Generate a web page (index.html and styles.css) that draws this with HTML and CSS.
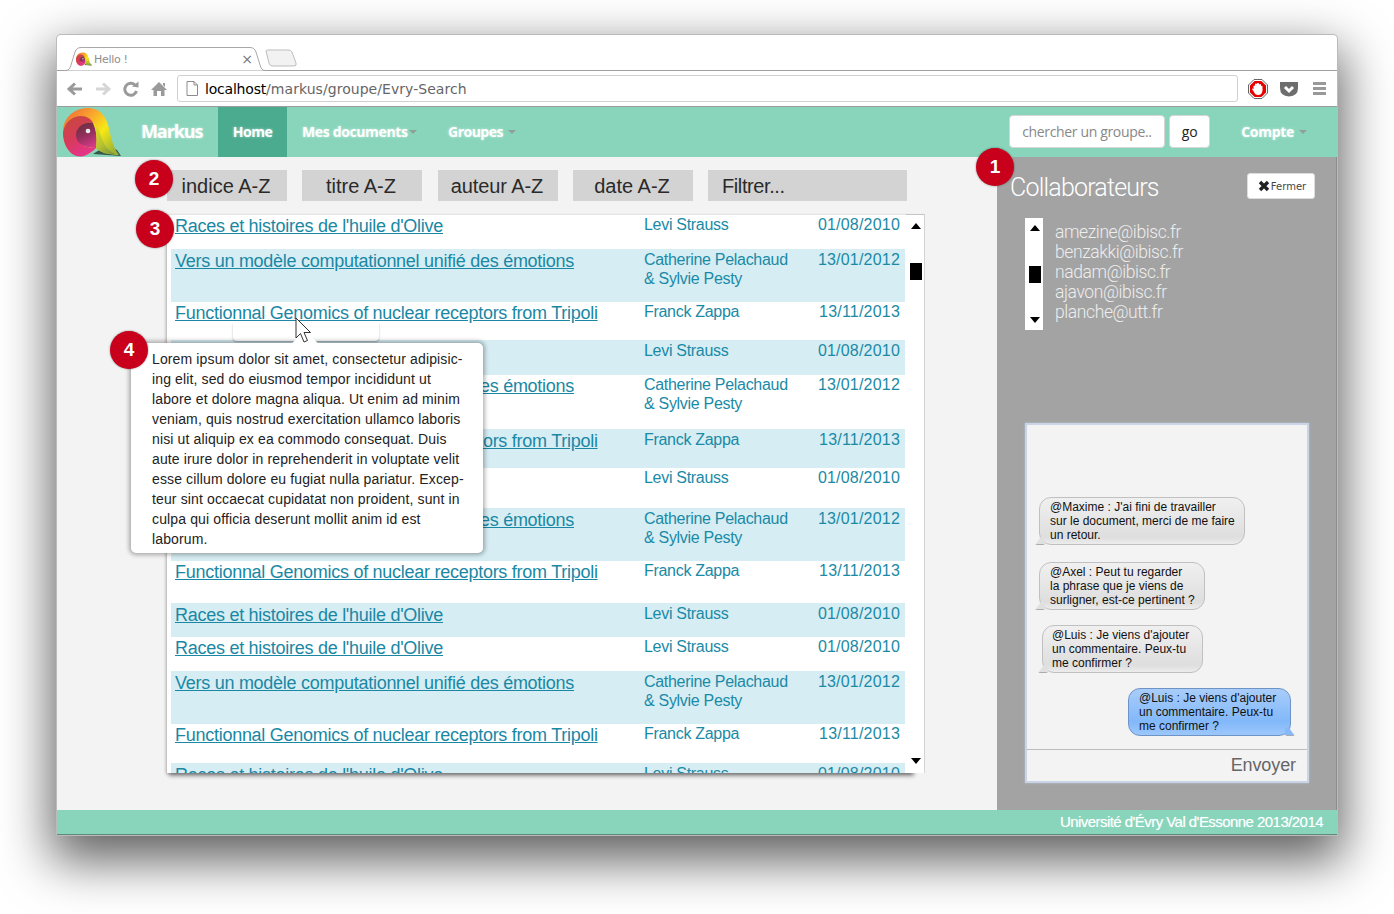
FILE: index.html
```html
<!DOCTYPE html>
<html lang="fr">
<head>
<meta charset="utf-8">
<title>Hello !</title>
<link rel="stylesheet" href="styles.css">
</head>
<body>
<div class="window">
  <div class="tabstrip">
    <div class="tab">
      <svg class="tab-shape" width="203" height="24" viewBox="0 0 203 24"><path d="M1 23.5 H3 C6 23.5 7 21 8 18 L12 5 C13 2 15 .5 18 .5 H187 C190 .5 192 2 193 5 L197 18 C198 21 199 23.5 202 23.5" fill="#fff" stroke="#a8a8a8"/></svg>
      <svg class="favicon" width="16" height="16" viewBox="0 0 58 50"><use href="#logo-mark"/></svg>
      <span class="tab-title">Hello !</span>
      <span class="tab-close">×</span>
    </div>
    <svg class="newtab" width="32" height="18" viewBox="0 0 32 18"><path d="M1 2 Q1 1 3 1 H23 Q26 1 27 3 L31 14 Q32 17 29 17 H7 Q5 17 4 14 Z" fill="#f2f2f2" stroke="#bdbdbd"/></svg>
  </div>
  <div class="toolbar">
    <svg class="tool" width="18" height="18" viewBox="0 0 18 18"><path d="M16 9 H5 M9 3.500 L3 9 L9 14.500" fill="none" stroke="#9a9a9a" stroke-width="3"/></svg>
    <svg class="tool" width="18" height="18" viewBox="0 0 18 18"><path d="M2 9 H13 M9 3.500 L15 9 L9 14.500" fill="none" stroke="#d6d6d6" stroke-width="3"/></svg>
    <svg class="tool" width="18" height="18" viewBox="0 0 18 18"><path d="M14.500 11 A6 6 0 1 1 13 5" fill="none" stroke="#9a9a9a" stroke-width="3"/><path d="M10 6.500 L16.500 7.500 V1.500 Z" fill="#9a9a9a"/></svg>
    <svg class="tool" width="18" height="18" viewBox="0 0 18 18"><path d="M9 2 L17 10 H14.500 V16 H11 V11 H7 V16 H3.500 V10 H1 Z M13 3 H15 V7 L13 5 Z" fill="#9a9a9a"/></svg>
    <div class="omnibox">
      <svg width="12" height="15" viewBox="0 0 12 15"><path d="M1 .5 H8 L11.500 4 V14.500 H1 Z M8 .5 V4 H11.500" fill="#fff" stroke="#8c8c8c"/></svg>
      <span class="url"><b>localhost</b>/markus/groupe/Evry-Search</span>
    </div>
    <svg class="ext" width="20" height="20" viewBox="0 0 20 20"><path d="M6 .5 H14 L19.500 6 V14 L14 19.500 H6 L.5 14 V6 Z" fill="#fff" stroke="#666"/><path d="M6.600 2 H13.400 L18 6.600 V13.400 L13.400 18 H6.600 L2 13.400 V6.600 Z" fill="#e80000"/><path d="M5.500 10.500 L5.500 7 Q6.500 6 7 7 V5 Q8 4 8.800 5 V4.500 Q10 3.500 11 4.500 V5.500 Q12 4.500 13 5.500 V7 Q14 6.500 14.500 7.500 V11.500 Q14 16 10 16 Q7 16 6 13 L4 10 Q4.500 9 5.500 10.500 Z" fill="#fff"/></svg>
    <svg class="ext" width="20" height="16" viewBox="0 0 20 16"><path d="M1 1 H19 V7 Q19 15 10 15.500 Q1 15 1 7 Z" fill="#6d6d6d"/><path d="M6 6 L10 10 L14 6" fill="none" stroke="#fff" stroke-width="3"/></svg>
    <div class="menu-icon"><i></i><i></i><i></i></div>
  </div>
  <nav class="navbar">
    <svg class="logo" width="60" height="50" viewBox="0 0 58 50">
      <defs>
        <linearGradient id="lg-a" x1="0" y1="0" x2="1" y2=".8"><stop offset="0" stop-color="#ee5f3a"/><stop offset=".38" stop-color="#f9a62e"/><stop offset=".66" stop-color="#f8e815"/><stop offset="1" stop-color="#9bb236"/></linearGradient>
        <linearGradient id="lg-b" x1=".1" y1="0" x2=".6" y2="1"><stop offset="0" stop-color="#c4493a"/><stop offset=".55" stop-color="#d83a5c"/><stop offset="1" stop-color="#e6348c"/></linearGradient>
        <linearGradient id="lg-c" x1=".3" y1="0" x2=".7" y2="1"><stop offset="0" stop-color="#6a2f3c"/><stop offset=".5" stop-color="#96305f"/><stop offset="1" stop-color="#d83a8a"/></linearGradient>
        <linearGradient id="lg-d" x1=".1" y1="0" x2=".8" y2="1"><stop offset="0" stop-color="#e8e21e"/><stop offset=".6" stop-color="#b5c232"/><stop offset="1" stop-color="#7d9a3c"/></linearGradient>
        <g id="logo-mark">
          <path d="M30 47 L58 49 L54 43 L44 38 Z" fill="#36574a"/>
          <path d="M0 25 C0 11 11 1 25 1 C38 1 43 10 46 21 C48 31 50 40 56 48 C46 48 38 46 33 41 C26 48 20 49 17 49 C7 49 0 38 0 25 Z" fill="url(#lg-a)"/>
          <path d="M0 26 C1 16 9 9 18 9 C24 9 28 12 30 16 C22 14 14 20 14 28 C14 36 20 41 33 41 C26 48 20 49.500 17 49.500 C7 49.500 0 38 0 26 Z" fill="url(#lg-b)"/>
          <path d="M30 16 C22 14 13 20 13 28 C13 36 20 41 33 41 C34 34 34 24 30 16 Z" fill="url(#lg-c)"/>
          <path d="M30 16 C34 24 34 34 33 41 C38 46 46 47 53 47 C44 44 40 36 37 26 C36 22 33 18 30 16 Z" fill="url(#lg-d)"/>
          <circle cx="25" cy="24" r="2.300" fill="#e6f1ee"/>
        </g>
      </defs>
      <use href="#logo-mark"/>
    </svg>
    <a class="brand">Markus</a>
    <a class="nav-item active">Home</a>
    <a class="nav-item docs">Mes documents<i class="caret"></i></a>
    <a class="nav-item groups">Groupes<i class="caret spaced"></i></a>
    <div class="nav-search">
      <span class="search-input">chercher un groupe..</span>
      <span class="go">go</span>
    </div>
    <a class="nav-item account">Compte<i class="caret spaced"></i></a>
  </nav>
  <div class="page">
    <main class="main">
      <div class="filters">
        <span class="filter">indice A-Z</span>
        <span class="filter">titre A-Z</span>
        <span class="filter filter-third">auteur A-Z</span>
        <span class="filter">date A-Z</span>
        <span class="filter filter-wide">Filtrer...</span>
      </div>
      <div class="list-box">
        <div class="rows">
          <div class="row h34"><a>Races et histoires de l'huile d'Olive</a><span>Levi Strauss</span><time>01/08/2010</time></div>
          <div class="row h53 tint"><a>Vers un modèle computationnel unifié des émotions</a><span>Catherine Pelachaud<br>&amp; Sylvie Pesty</span><time>13/01/2012</time></div>
          <div class="row h38"><a>Functionnal Genomics of nuclear receptors from Tripoli</a><span>Franck Zappa</span><time>13/11/2013</time></div>
          <div class="row h35 tint"><a>Races et histoires de l'huile d'Olive</a><span>Levi Strauss</span><time>01/08/2010</time></div>
          <div class="row h54"><a>Vers un modèle computationnel unifié des émotions</a><span>Catherine Pelachaud<br>&amp; Sylvie Pesty</span><time>13/01/2012</time></div>
          <div class="row h39 tint"><a>Functionnal Genomics of nuclear receptors from Tripoli</a><span>Franck Zappa</span><time>13/11/2013</time></div>
          <div class="row h40"><a>Races et histoires de l'huile d'Olive</a><span>Levi Strauss</span><time>01/08/2010</time></div>
          <div class="row h53 tint"><a>Vers un modèle computationnel unifié des émotions</a><span>Catherine Pelachaud<br>&amp; Sylvie Pesty</span><time>13/01/2012</time></div>
          <div class="row h42"><a>Functionnal Genomics of nuclear receptors from Tripoli</a><span>Franck Zappa</span><time>13/11/2013</time></div>
          <div class="row h34 tint"><a>Races et histoires de l'huile d'Olive</a><span>Levi Strauss</span><time>01/08/2010</time></div>
          <div class="row h34"><a>Races et histoires de l'huile d'Olive</a><span>Levi Strauss</span><time>01/08/2010</time></div>
          <div class="row h53 tint"><a>Vers un modèle computationnel unifié des émotions</a><span>Catherine Pelachaud<br>&amp; Sylvie Pesty</span><time>13/01/2012</time></div>
          <div class="row h39"><a>Functionnal Genomics of nuclear receptors from Tripoli</a><span>Franck Zappa</span><time>13/11/2013</time></div>
          <div class="row h34 tint"><a>Races et histoires de l'huile d'Olive</a><span>Levi Strauss</span><time>01/08/2010</time></div>
        </div>
        <div class="scroll scroll-main"><i class="up"></i><i class="thumb"></i><i class="down"></i></div>
      </div>
      <div class="popover-ghost"></div>
      <div class="popover">
        <p>Lorem ipsum dolor sit amet, consectetur adipisic-<br>ing elit, sed do eiusmod tempor incididunt ut<br>labore et dolore magna aliqua. Ut enim ad minim<br>veniam, quis nostrud exercitation ullamco laboris<br>nisi ut aliquip ex ea commodo consequat. Duis<br>aute irure dolor in reprehenderit in voluptate velit<br>esse cillum dolore eu fugiat nulla pariatur. Excep-<br>teur sint occaecat cupidatat non proident, sunt in<br>culpa qui officia deserunt mollit anim id est<br>laborum.</p>
      </div>
      <svg class="cursor" width="18" height="28" viewBox="0 0 18 28"><path d="M1 1 V21 L5.500 16.500 L9 25 L12.500 23.500 L9 15.500 H15.500 Z" fill="#fff" stroke="#333" stroke-width="1"/></svg>
      <b class="badge b2">2</b>
      <b class="badge b3">3</b>
      <b class="badge b4">4</b>
    </main>
    <aside class="side">
      <b class="badge b1">1</b>
      <div class="side-head">
        <h2>Collaborateurs</h2>
        <span class="close"><svg width="12" height="12" viewBox="0 0 12 12"><path d="M2 2 L10 10 M10 2 L2 10" stroke="#222" stroke-width="3.400"/></svg>Fermer</span>
      </div>
      <div class="members">
        <div class="scroll scroll-side"><i class="up"></i><i class="thumb"></i><i class="down"></i></div>
        <ul>
          <li>amezine@ibisc.fr</li>
          <li>benzakki@ibisc.fr</li>
          <li>nadam@ibisc.fr</li>
          <li>ajavon@ibisc.fr</li>
          <li>planche@utt.fr</li>
        </ul>
      </div>
      <div class="chat">
        <div class="messages">
          <p class="bubble m1">@Maxime : J'ai fini de travailler<br>sur le document, merci de me faire<br>un retour.</p>
          <p class="bubble m2">@Axel : Peut tu regarder<br>la phrase que je viens de<br>surligner, est-ce pertinent ?</p>
          <p class="bubble m3">@Luis : Je viens d'ajouter<br>un commentaire. Peux-tu<br>me confirmer ?</p>
          <p class="bubble me">@Luis : Je viens d'ajouter<br>un commentaire. Peux-tu<br>me confirmer ?</p>
        </div>
        <div class="send">Envoyer</div>
      </div>
    </aside>
  </div>
  <footer class="footer">Université d'Évry Val d'Essonne 2013/2014</footer>
</div>
</body>
</html>
```
FILE: styles.css
```css
* { box-sizing: border-box; }
html, body { margin: 0; height: 100%; background: #fff; overflow: hidden; }
body { padding: 35px 57px 0; font-family: "Liberation Sans", Arial, sans-serif; }
.window { width: 1280px; height: 800px; display: flex; flex-direction: column; position: relative; border-radius: 4px 4px 0 0; box-shadow: 0 0 0 1px #bbb, 0 20px 50px 6px rgba(0,0,0,.62); background: #fff; }

.tabstrip { height: 36px; flex: none; display: flex; align-items: flex-end; padding-left: 6px; border-bottom: 1px solid #a0a0a0; position: relative; }
.tab { width: 203px; height: 24px; position: relative; display: flex; align-items: center; padding: 0 0 0 13px; margin-bottom: -1px; font-family: "DejaVu Sans", sans-serif; font-size: 11px; color: #8f8f8f; }
.tab-shape { position: absolute; left: 0; top: 0; }
.favicon, .tab-title, .tab-close { position: relative; }
.favicon { flex: none; margin-right: 2px; }
.tab-title { flex: 1; letter-spacing: -.3px; }
.tab-close { margin-right: 13px; font-size: 14px; color: #777; }
.newtab { margin: 0 0 3px -1px; }

.toolbar { height: 36px; flex: none; display: flex; align-items: center; background: #fff; border-bottom: 1px solid #9c9c9c; padding: 0 11px 0 9px; }
.tool { margin-right: 10px; flex: none; }
.omnibox { width: 1061px; height: 27px; flex: none; margin: 0 10px 0 -1px; display: flex; align-items: center; gap: 9px; padding-left: 8px; border: 1px solid #d0d0d0; border-radius: 3px; }
.url { font-family: "DejaVu Sans", sans-serif; font-size: 14px; color: #666; letter-spacing: .05px; margin-left: -2px; }
.url b { font-weight: 400; color: #000; letter-spacing: -.2px; }
.ext { margin-right: 11px; flex: none; }
.menu-icon { width: 13px; margin-left: auto; display: flex; flex-direction: column; gap: 2px; }
.menu-icon i { height: 3px; background: #999; }

.navbar { height: 50px; flex: none; display: flex; align-items: center; background: #88d5bb; font-family: "Open Sans", sans-serif; position: relative; }
.logo { position: absolute; left: 5px; top: 0; overflow: visible; }
.brand { margin: 0 0 2px 84px; width: 77px; font-size: 18px; font-weight: 700; letter-spacing: -1.1px; color: #fff; text-shadow: 0 0 3px rgba(255,255,255,.6); }
.nav-item { font-size: 14px; font-weight: 700; letter-spacing: -.5px; color: #fff; text-shadow: 0 0 3px rgba(255,255,255,.6); display: flex; align-items: center; height: 50px; padding-bottom: 2px; }
.nav-item.active { background: #4aab8e; width: 69px; justify-content: center; }
.docs { margin-left: 15px; width: 146px; letter-spacing: -.36px; }
.caret { width: 0; height: 0; border: 4px solid transparent; border-top-color: #8f9f99; border-bottom: 0; margin-left: 1px; margin-top: 2px; }
.caret.spaced { margin-left: 5px; }
.nav-search { margin: 0 0 1px auto; display: flex; gap: 4px; }
.search-input { width: 156px; height: 33px; background: #fff; border: 1px solid #d6d6d6; border-radius: 4px; font-size: 14px; color: #888; letter-spacing: -.35px; line-height: 32px; padding-left: 12px; }
.go { width: 41px; height: 33px; background: #fff; border: 1px solid #d6d6d6; border-radius: 4px; font-size: 14px; color: #222; line-height: 32px; text-align: center; }
.account { margin: 0 30px 0 31px; letter-spacing: -.3px; }

.page { flex: 1; min-height: 0; display: flex; }
.main { width: 940px; flex: none; background: #f3f3f3; padding: 13px 0 0 110px; position: relative; }
.filters { display: flex; gap: 15px; height: 31px; }
.filter { width: 120px; background: #d3d3d3; font-size: 20px; color: #2a2a2a; text-align: center; line-height: 32px; padding-right: 2px; }
.filter-third { margin-left: 1px; letter-spacing: -.1px; }
.filter-wide { width: 199px; text-align: left; padding-left: 14px; letter-spacing: -.4px; }

.list-box { width: 745px; height: 558px; margin-top: 14px; background: #fff; position: relative; padding: 0 7px 0 4px; box-shadow: 2px 3px 4px rgba(0,0,0,.4), -1px 1px 3px rgba(0,0,0,.25); }
.rows { height: 558px; overflow: hidden; }
.row { display: grid; grid-template-columns: 469px 1fr 84px; padding: 0 5px 0 4px; color: #1a8aa6; font-size: 16px; line-height: 19px; letter-spacing: -.3px; }
.row a { font-size: 18px; line-height: 22px; text-decoration: underline; letter-spacing: -.27px; color: #1a88a4; }
.row time { text-align: right; letter-spacing: .2px; }
.tint { background: #d6edf4; padding-top: 1px; }
.h34 { height: 34px; } .h35 { height: 35px; } .h38 { height: 38px; } .h39 { height: 39px; }
.h40 { height: 40px; } .h42 { height: 42px; } .h53 { height: 53px; } .h54 { height: 54px; }

.scroll { position: absolute; background: #fff; width: 18px; }
.scroll-main { left: 739px; top: -1px; bottom: 0; width: 19px; border-top: 1px solid #c4c4c4; border-right: 1px solid #d4d4d4; }
.scroll-side { position: relative; flex: none; height: 112px; }
.up, .down { position: absolute; left: 5px; width: 0; height: 0; border: 5px solid transparent; }
.up { top: 7px; border-top: 0; border-bottom: 6px solid #000; }
.down { bottom: 7px; border-bottom: 0; border-top: 6px solid #000; }
.thumb { position: absolute; left: 4px; top: 48px; width: 12px; height: 17px; background: #000; }
.scroll-main .up { top: 8px; }
.scroll-main .down { bottom: 9px; }
.scroll-main .thumb { top: 48px; left: 4px; }

.popover-ghost { position: absolute; left: 176px; top: 166px; width: 146px; height: 18px; background: #fff; border-radius: 0 0 4px 4px; box-shadow: 0 1px 2px rgba(0,0,0,.3); z-index: 1; }
.popover { position: absolute; left: 74px; top: 186px; width: 352px; height: 210px; background: #fff; border-radius: 5px; box-shadow: 0 0 4px 2px rgba(0,0,0,.3); padding: 6px 0 0 21px; z-index: 2; }
.popover::before { content: ""; position: absolute; left: 165px; top: -9px; width: 18px; height: 18px; background: #fff; transform: rotate(45deg); }
.popover p { margin: 0; font-size: 14px; line-height: 20px; color: #222; position: relative; white-space: nowrap; letter-spacing: .13px; }
.cursor { position: absolute; left: 238px; top: 160px; z-index: 3; }

.badge { position: absolute; width: 38px; height: 38px; border-radius: 50%; background: #c9001c; color: #fff; font-size: 19px; text-align: center; line-height: 37px; z-index: 4; box-shadow: 0 0 2px rgba(0,0,0,.5); }
.b2 { left: 78px; top: 3px; } .b3 { left: 79px; top: 53px; } .b4 { left: 53px; top: 174px; }
.b1 { left: -21px; top: -9px; }

.side { flex: 1; background: #a3a3a3; position: relative; padding: 16px 21px 0 13px; display: flex; flex-direction: column; border-right: 1px solid #8d8d8d; }
.side-head { display: flex; justify-content: space-between; height: 45px; }
.side-head h2 { margin: 0; font-family: Roboto, sans-serif; font-weight: 300; font-size: 25px; line-height: 29px; color: #fff; letter-spacing: -.8px; }
.close { width: 68px; height: 26px; background: #fff; border: 1px solid #ddd; border-radius: 3px; font-family: "DejaVu Sans", sans-serif; font-size: 10px; color: #444; display: flex; align-items: center; justify-content: center; gap: 1px; padding-left: 2px; }
.members { display: flex; gap: 12px; margin-left: 15px; height: 205px; }
.members ul { list-style: none; margin: 4px 0 0; padding: 0; font-family: Roboto, sans-serif; font-weight: 300; font-size: 17.500px; line-height: 20px; color: #eee; letter-spacing: -.4px; }

.chat { width: 284px; height: 360px; margin-left: 15px; background: #f3f3f3; border: 2px solid #c9d5e6; box-shadow: 0 0 2px #b9c8dc; display: flex; flex-direction: column; }
.messages { flex: 1; position: relative; }
.bubble { position: absolute; margin: 0; height: 48px; font-size: 12px; line-height: 14px; color: #111; padding: 2px 0 0 10px; border: 1px solid #c0c0c0; border-radius: 12px; background: linear-gradient(#f0f0f0, #dedede 85%, #ececec); }
.bubble::after { content: ""; position: absolute; left: -5px; bottom: -1px; width: 10px; height: 7px; border-bottom: 1px solid #aaa; background: #e0e0e0; border-radius: 0 0 8px 8px / 0 0 2px 2px; clip-path: polygon(0 100%, 60% 0, 100% 0, 100% 100%); }
.m1 { left: 12px; top: 72px; width: 206px; }
.m2 { left: 12px; top: 137px; width: 166px; }
.m3 { left: 15px; top: 200px; width: 161px; padding-left: 9px; }
.me { left: 101px; top: 263px; width: 163px; background: linear-gradient(#a9cdfa, #82b8fa 70%, #9cc7fb); border-color: #6d94c4; }
.me::after { left: auto; right: -5px; background: #85b9fa; clip-path: polygon(0 0, 40% 0, 100% 100%, 0 100%); }
.send { height: 32px; flex: none; border-top: 1px solid #bdbdbd; text-align: right; font-size: 18px; line-height: 30px; color: #666; padding-right: 11px; letter-spacing: -.1px; }

.footer { height: 25px; flex: none; background: #88d5bb; border-bottom: 1px solid #5f8a7b; color: #fff; font-size: 15px; line-height: 24px; text-align: right; padding-right: 14px; letter-spacing: -.55px; text-shadow: 0 0 1px rgba(255,255,255,.5); }
```
